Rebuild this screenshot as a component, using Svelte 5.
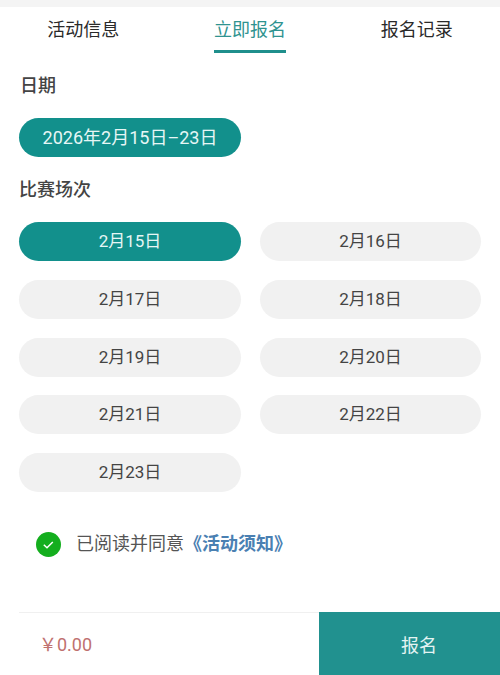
<script lang="ts">
  const tabs = ["活动信息", "立即报名", "报名记录"];
  const days = [15, 16, 17, 18, 19, 20, 21, 22, 23];
  let activeTab = $state(1);
  let activeDay = $state(15);
  let agreed = $state(true);
</script>

<div class="page">
  <div class="topstrip"></div>

  <nav class="tabs">
    {#each tabs as tab, i}
      <button class="tab" class:on={activeTab === i} onclick={() => (activeTab = i)}>{tab}</button>
    {/each}
  </nav>

  <section class="form">
    <h2 class="first">日期</h2>
    <button class="pill on range">2026年2月15日–23日</button>

    <h2 class="second">比赛场次</h2>
    <div class="grid">
      {#each days as d}
        <button class="pill" class:on={activeDay === d} onclick={() => (activeDay = d)}>2月{d}日</button>
      {/each}
    </div>

    <div class="agree">
      <button class="check" aria-label="同意" onclick={() => (agreed = !agreed)}>
        <svg width="25" height="25" viewBox="0 0 25 25">
          <circle cx="12.5" cy="12.5" r="12.5" fill={agreed ? "#14ae1e" : "#ddd"} />
          <path d="M7.8 12.8l3.2 3 5.8-5.8" fill="none" stroke="#fff" stroke-width="1.5" />
        </svg>
      </button>
      <span class="copy">已阅读并同意</span><span class="copy link">《活动须知》</span>
    </div>
  </section>

  <footer class="bar">
    <div class="price">￥0.00</div>
    <button class="submit">报名</button>
  </footer>
</div>

<style>
  :global(body) {
    margin: 0;
    background: #fff;
  }

  .page {
    width: 500px;
    height: 675px;
    display: flex;
    flex-direction: column;
    overflow: hidden;
    font-family: Roboto, "Noto Sans CJK SC", sans-serif;
    color: #333;
  }

  button {
    font: inherit;
    border: 0;
    padding: 0;
    background: none;
    color: inherit;
  }

  .topstrip {
    height: 7px;
    background: #f4f4f4;
  }

  .tabs {
    display: grid;
    grid-template-columns: repeat(3, 1fr);
    justify-items: center;
    height: 46px;
  }

  .tab {
    height: 46px;
    width: 72px;
    box-sizing: border-box;
    padding-top: 3px;
    border-bottom: 3px solid transparent;
    font-size: 18px;
    line-height: 40px;
    color: #2a2a2a;
    white-space: nowrap;
  }

  .tab.on {
    color: #2f9390;
    border-bottom-color: #1f8f8c;
  }

  .form {
    flex: 1;
    padding: 0 19px;
  }

  h2 {
    margin: 0;
    font-size: 18px;
    font-weight: 500;
    line-height: 26px;
    color: #444;
    padding-left: 1px;
  }

  .first {
    margin-top: 20px;
  }

  .second {
    margin-top: 20px;
    padding-left: 0;
  }

  .pill {
    display: block;
    height: 39px;
    box-sizing: border-box;
    border-radius: 20px;
    background: #f1f1f1;
    color: #444;
    font-size: 17px;
    line-height: 39px;
    text-align: center;
  }

  .pill.on {
    background: #12908c;
    color: #e6f6f5;
  }

  .range {
    width: 222px;
    margin-top: 19px;
    font-size: 18px;
  }

  .grid {
    display: grid;
    grid-template-columns: 222px 221px;
    gap: 18.75px 19px;
    margin-top: 19px;
  }

  .agree {
    display: flex;
    align-items: flex-start;
    margin-top: 40px;
    padding-left: 17px;
    font-size: 18px;
    color: #555;
  }

  .check {
    width: 25px;
    height: 25px;
    margin-right: 15px;
    display: block;
  }

  .check svg {
    display: block;
  }

  .copy {
    line-height: 23px;
  }

  .link {
    color: #4a80b2;
    font-weight: 700;
  }

  .bar {
    height: 63px;
    margin-left: 19px;
    border-top: 1px solid #f0f0f0;
    display: flex;
    box-sizing: border-box;
    align-items: stretch;
  }

  .price {
    flex: 1;
    padding-left: 20px;
    font-size: 18px;
    line-height: 64px;
    color: #c0716f;
  }

  .submit {
    width: 181px;
    padding-left: 19px;
    background: #21918f;
    color: #e4f4f3;
    font-size: 18px;
    margin-top: -1px;
  }
</style>
